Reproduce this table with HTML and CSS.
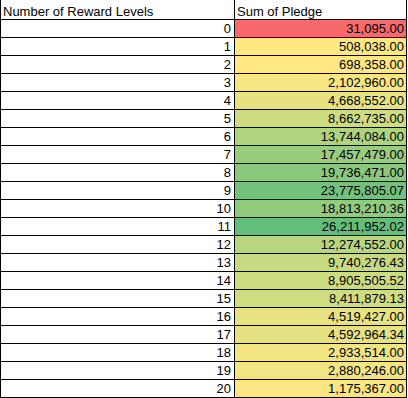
FILE: index.html
```html
<!DOCTYPE html>
<html>
<head>
<meta charset="utf-8">
<link rel="stylesheet" href="styles.css">
</head>
<body>
<table class="sheet">
  <colgroup><col class="c-level"><col class="c-sum"></colgroup>
  <thead>
    <tr><th class="lvl">Number of Reward Levels</th><th class="sum">Sum of Pledge</th></tr>
  </thead>
  <tbody>
    <tr><td class="lvl">0</td><td class="sum" style="background:#F8696B">31,095.00</td></tr>
    <tr><td class="lvl">1</td><td class="sum" style="background:#FFE784">508,038.00</td></tr>
    <tr><td class="lvl">2</td><td class="sum" style="background:#FEE784">698,358.00</td></tr>
    <tr><td class="lvl">3</td><td class="sum" style="background:#F5E583">2,102,960.00</td></tr>
    <tr><td class="lvl">4</td><td class="sum" style="background:#E6E283">4,668,552.00</td></tr>
    <tr><td class="lvl">5</td><td class="sum" style="background:#CDDC81">8,662,735.00</td></tr>
    <tr><td class="lvl">6</td><td class="sum" style="background:#AFD37F">13,744,084.00</td></tr>
    <tr><td class="lvl">7</td><td class="sum" style="background:#98CD7E">17,457,479.00</td></tr>
    <tr><td class="lvl">8</td><td class="sum" style="background:#8AC97D">19,736,471.00</td></tr>
    <tr><td class="lvl">9</td><td class="sum" style="background:#72C27C">23,775,805.07</td></tr>
    <tr><td class="lvl">10</td><td class="sum" style="background:#90CB7E">18,813,210.36</td></tr>
    <tr><td class="lvl">11</td><td class="sum" style="background:#63BE7B">26,211,952.02</td></tr>
    <tr><td class="lvl">12</td><td class="sum" style="background:#B8D680">12,274,552.00</td></tr>
    <tr><td class="lvl">13</td><td class="sum" style="background:#C7DA81">9,740,276.43</td></tr>
    <tr><td class="lvl">14</td><td class="sum" style="background:#CCDC81">8,905,505.52</td></tr>
    <tr><td class="lvl">15</td><td class="sum" style="background:#CFDD81">8,411,879.13</td></tr>
    <tr><td class="lvl">16</td><td class="sum" style="background:#E7E283">4,519,427.00</td></tr>
    <tr><td class="lvl">17</td><td class="sum" style="background:#E6E283">4,592,964.34</td></tr>
    <tr><td class="lvl">18</td><td class="sum" style="background:#F0E483">2,933,514.00</td></tr>
    <tr><td class="lvl">19</td><td class="sum" style="background:#F0E483">2,880,246.00</td></tr>
    <tr><td class="lvl">20</td><td class="sum" style="background:#FBE684">1,175,367.00</td></tr>
  </tbody>
</table>
</body>
</html>
```

FILE: styles.css
```css
html, body {
  margin: 0;
  padding: 0;
  background: #ffffff;
}

.sheet {
  border-collapse: separate;
  border-spacing: 0;
  table-layout: fixed;
  width: 407px;
  font-family: "Liberation Sans", Arial, sans-serif;
  font-size: 13px;
  line-height: 15px;
  color: #000000;
}

.c-level { width: 234px; }
.c-sum { width: 173px; }

.sheet th,
.sheet td {
  padding: 0;
  font-weight: normal;
  white-space: nowrap;
  overflow: hidden;
  border-bottom: 1px solid #000000;
}

.sheet th {
  height: 20px;
  box-sizing: border-box;
  padding-top: 4px;
  text-align: left;
  vertical-align: top;
}

.sheet td {
  height: 18px;
  box-sizing: border-box;
  padding-top: 1px;
  text-align: right;
  vertical-align: top;
}

.sheet .lvl {
  border-left: 1px solid #000000;
}

.sheet .sum {
  border-left: 1px solid #000000;
  border-right: 1px solid #000000;
}

.sheet th.lvl { padding-left: 2px; }
.sheet th.sum { padding-left: 2px; }

.sheet td.lvl { padding-right: 3px; }
.sheet td.sum { padding-right: 2px; }
```
